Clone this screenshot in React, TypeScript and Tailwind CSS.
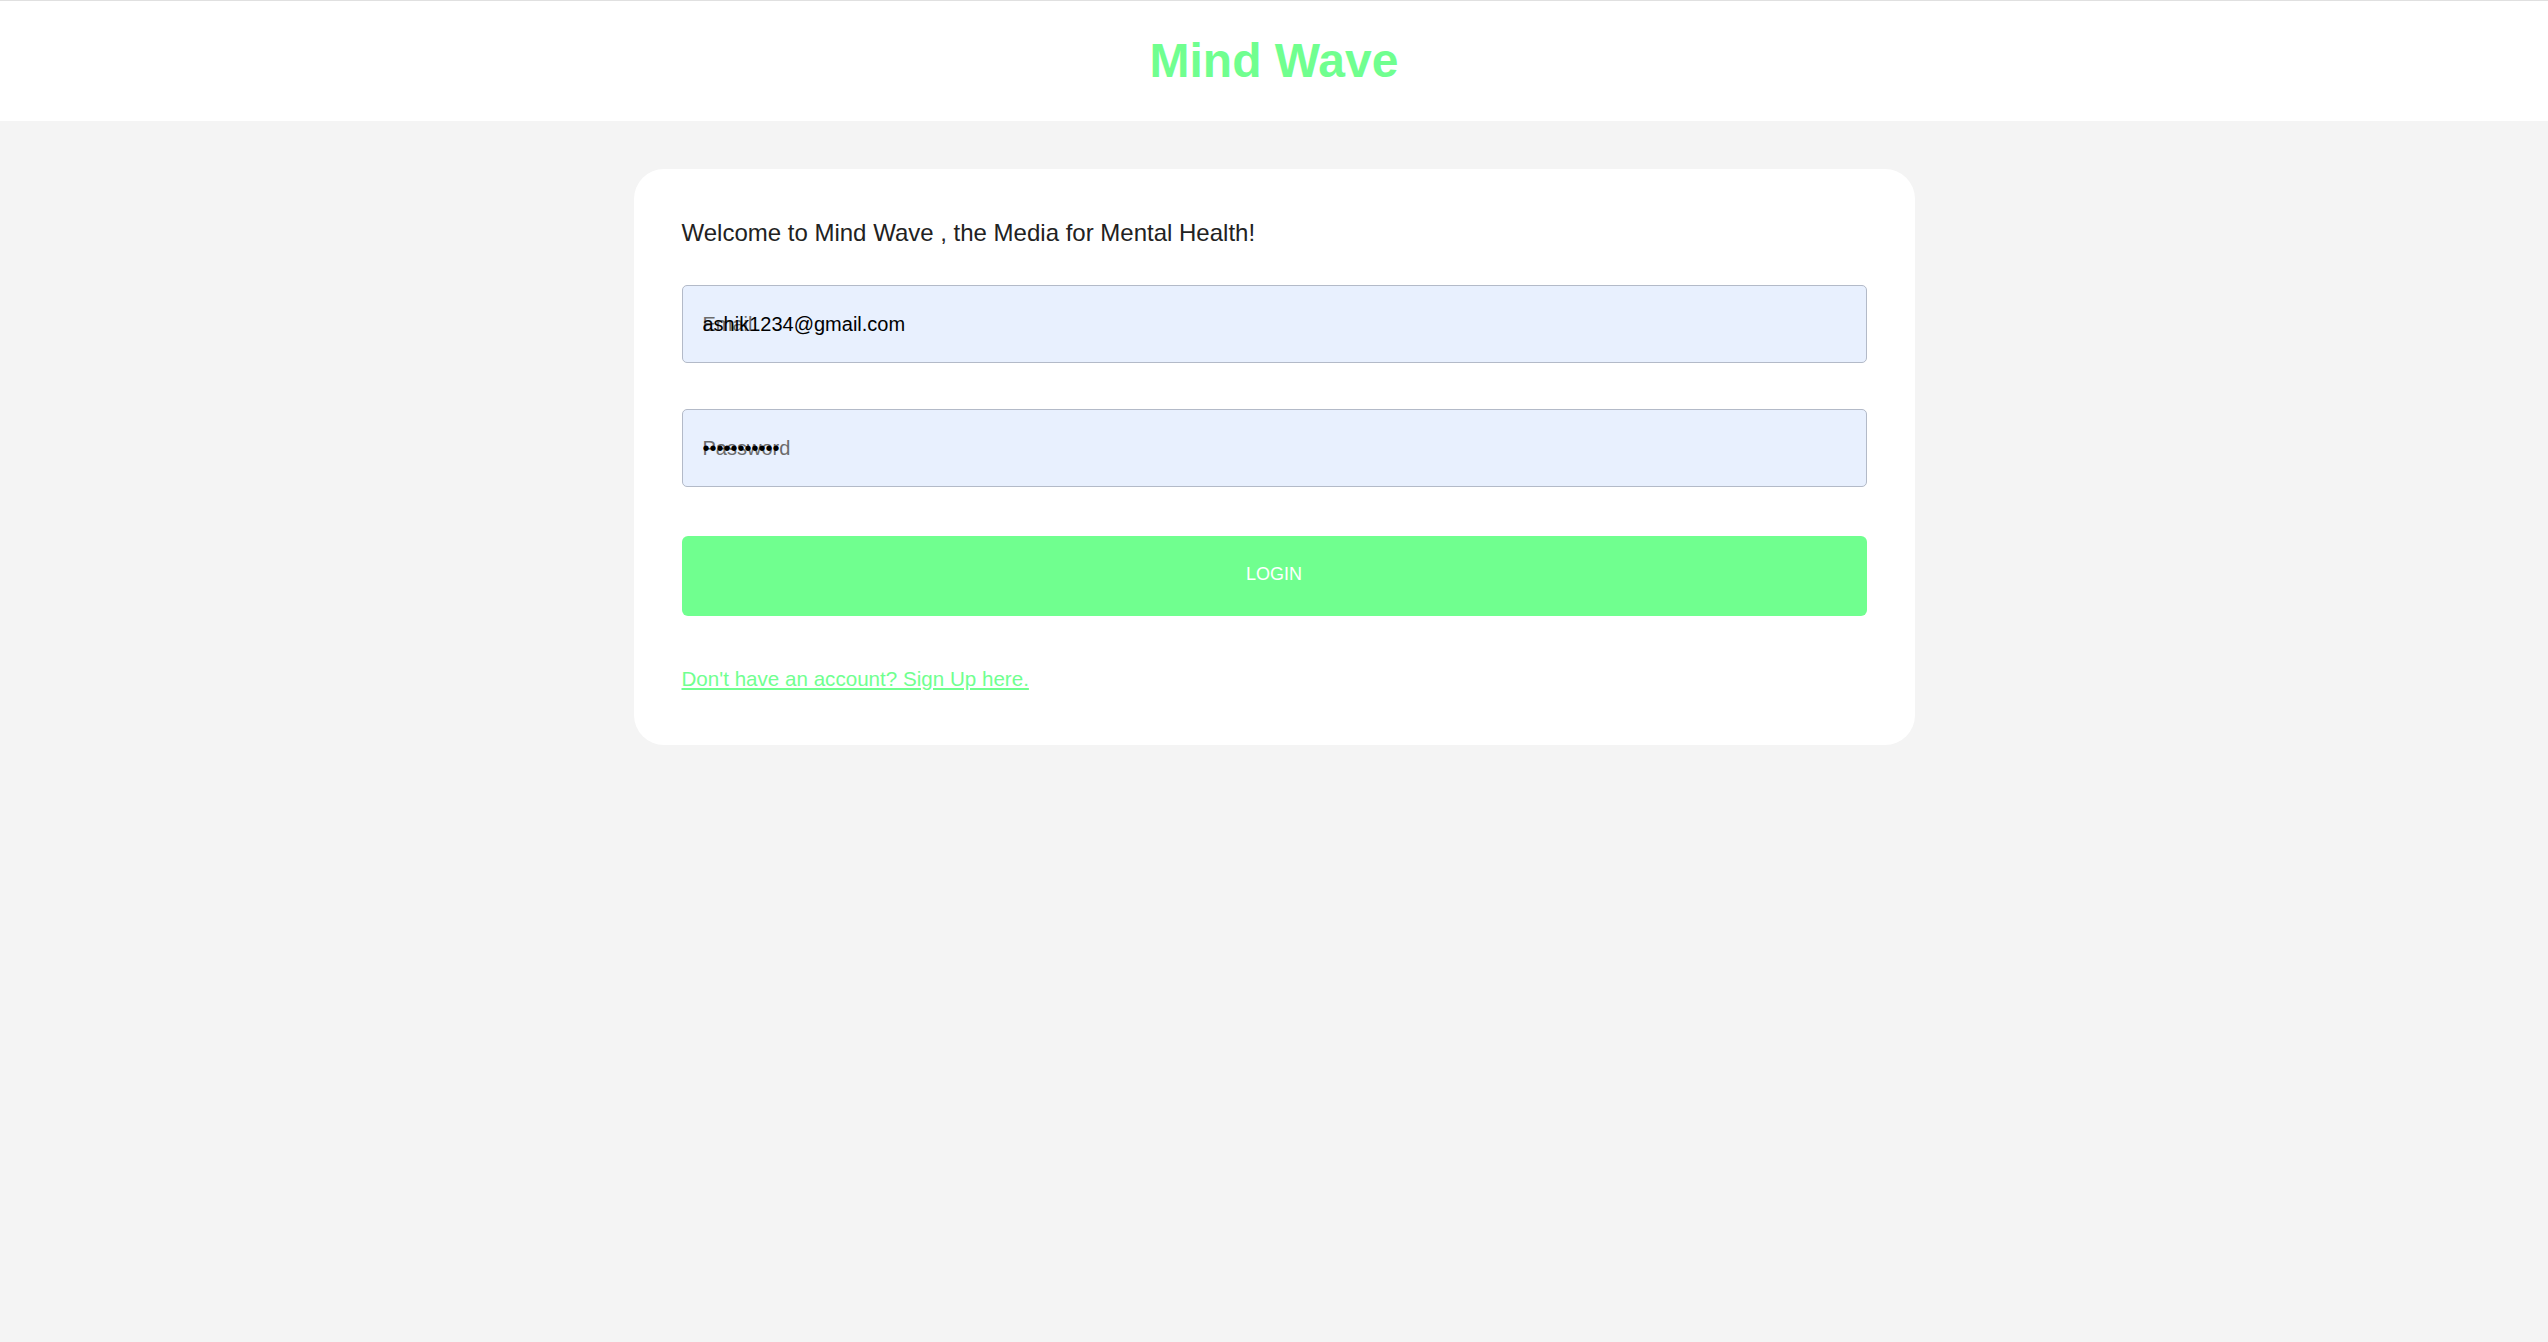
import React from "react";

const GREEN = "#70ff8f";

const Field = ({
  type,
  value,
  ghost,
}: {
  type: string;
  value: string;
  ghost: string;
}) => {
  return (
    <div className="relative h-[78px] w-full rounded-[5px] border border-[#b3bac8] bg-[#e8f0fe]">
      <span className="pointer-events-none absolute left-[20px] top-[27px] text-[20px] leading-[23px] text-[#6b6b6b]">
        {ghost}
      </span>
      <input
        className="relative h-full w-full bg-transparent pl-[20px] pr-[20px] pt-[2px] text-[20px] leading-[23px] text-black outline-none"
        type={type}
        value={value}
        readOnly
      />
    </div>
  );
};

const App = () => {
  return (
    <div className="min-h-screen w-full bg-[#f4f4f4] font-['Liberation_Sans',Arial,sans-serif]">
      <header className="flex h-[121px] items-center justify-center border-t border-[#e0e0e0] bg-white">
        <h1 className="text-[48px] font-bold text-[#70ff8f]">Mind Wave</h1>
      </header>

      <main className="flex justify-center pt-[48px]">
        <div className="w-[1281px] rounded-[30px] bg-white px-[48px] pb-[52px] pt-[50px]">
          <p className="text-[24px] leading-[27.6px] text-[#222]">
            Welcome to Mind Wave , the Media for Mental Health!
          </p>

          <form
            className="mt-[38px] flex flex-col"
            onSubmit={(e) => e.preventDefault()}
          >
            <Field type="email" value="ashik1234@gmail.com" ghost="Email" />
            <div className="mt-[46px]">
              <Field type="password" value="ashik123456" ghost="Password" />
            </div>
            <button
              className="mt-[49px] h-[80px] w-full rounded-[6px] pb-[2px] text-[18px] text-white"
              style={{ backgroundColor: GREEN }}
            >
              LOGIN
            </button>
          </form>

          <div className="mt-[51px] leading-[24px]">
            <a href="#" className="text-[20.6px] text-[#70ff8f] underline">
              Don't have an account? Sign Up here.
            </a>
          </div>
        </div>
      </main>
    </div>
  );
};

export default App;
